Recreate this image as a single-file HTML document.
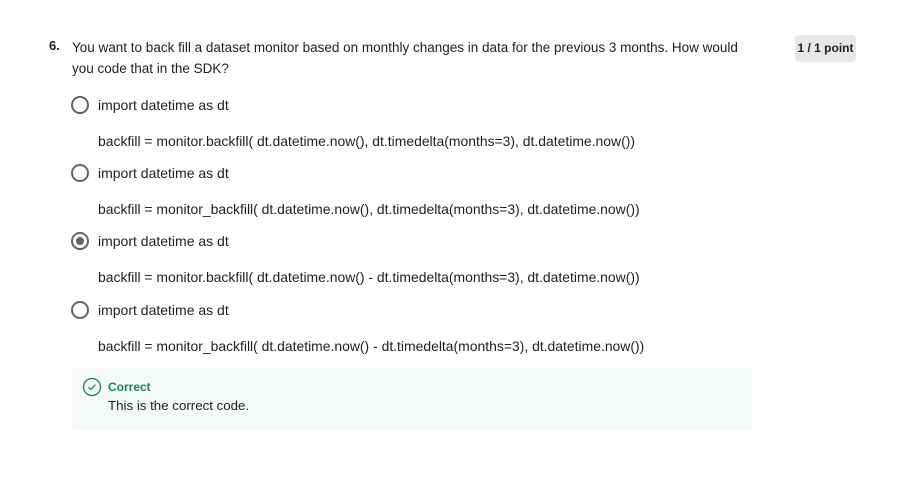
<!DOCTYPE html>
<html><head><style>
body{margin:0;width:910px;height:478px;background:#fff;font-family:"Liberation Sans",sans-serif;color:#1f1f1f;position:relative;overflow:hidden}
.a{position:absolute;white-space:nowrap;font-size:14px;line-height:16px}
.c{font-size:13.93px}
.r{position:absolute;width:14px;height:14px;border:2px solid #636363;border-radius:50%;left:71px}
.r.s::after{content:"";position:absolute;left:3px;top:3px;width:8px;height:8px;border-radius:50%;background:#636363}
</style></head><body>
<div class="a" style="left:49px;top:38px;font-weight:bold;font-size:13px">6.</div>
<div class="a" style="left:72px;top:37px;line-height:21px;font-size:13.5px">You want to back fill a dataset monitor based on monthly changes in data for the previous 3 months. How would<br>you code that in the SDK?</div>
<div class="a" style="left:795px;top:35px;width:61px;height:27px;background:#e5e7e8;border-radius:4px;font-size:12px;font-weight:bold;text-align:center;line-height:27px">1 / 1 point</div>

<div class="r" style="top:96px"></div><div class="a" style="left:98px;top:97px">import datetime as dt</div>
<div class="a c" style="left:98px;top:133px">backfill = monitor.backfill( dt.datetime.now(), dt.timedelta(months=3), dt.datetime.now())</div>
<div class="r" style="top:164px"></div><div class="a" style="left:98px;top:165px">import datetime as dt</div>
<div class="a c" style="left:98px;top:201px">backfill = monitor_backfill( dt.datetime.now(), dt.timedelta(months=3), dt.datetime.now())</div>
<div class="r s" style="top:232px"></div><div class="a" style="left:98px;top:233px">import datetime as dt</div>
<div class="a c" style="left:98px;top:269px">backfill = monitor.backfill( dt.datetime.now() - dt.timedelta(months=3), dt.datetime.now())</div>
<div class="r" style="top:301px"></div><div class="a" style="left:98px;top:302px">import datetime as dt</div>
<div class="a c" style="left:98px;top:338px">backfill = monitor_backfill( dt.datetime.now() - dt.timedelta(months=3), dt.datetime.now())</div>

<div style="position:absolute;left:72px;top:368px;width:680px;height:61px;background:#f4f8f7"></div>
<svg style="position:absolute;left:82px;top:377px" width="20" height="20" viewBox="0 0 20 20"><circle cx="10" cy="10" r="8.5" fill="none" stroke="#1f8354" stroke-width="1.3"/><path d="M6.5 10.2l2.3 2.3 4.6-4.8" fill="none" stroke="#1f8354" stroke-width="1.3"/></svg>
<div class="a" style="left:108px;top:379px;font-size:12px;font-weight:bold;color:#1f8354">Correct</div>
<div class="a" style="left:108px;top:398px;font-size:13.3px">This is the correct code.</div>
</body></html>
